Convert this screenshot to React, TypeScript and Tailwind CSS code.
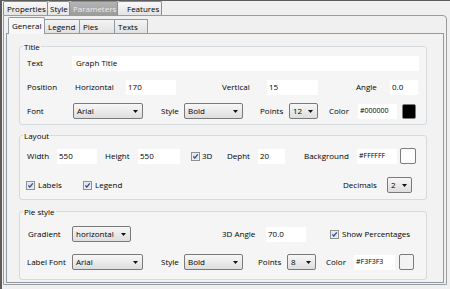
import { FC, ReactNode } from "react";

type BoxProps = {
  className?: string;
  children?: ReactNode;
};

const Lbl: FC<BoxProps> = ({ className = "", children }) => (
  <span className={`shrink-0 whitespace-nowrap ${className}`}>{children}</span>
);

const Field: FC<BoxProps> = ({ className = "", children }) => (
  <div className={`h-[15px] shrink-0 bg-white pl-[2px] leading-[13px] ${className}`}>
    {children}
  </div>
);

const Select: FC<BoxProps> = ({ className = "", children }) => (
  <div
    className={`flex h-[16px] shrink-0 items-center rounded-[2px] border border-[#7a7a7a] bg-gradient-to-b from-[#f7f7f7] to-[#dedede] pl-[3px] ${className}`}
  >
    <span className="leading-[14px]">{children}</span>
    <svg className="ml-auto mr-[4px]" width="5" height="3" viewBox="0 0 5 3">
      <path d="M0 0 L5 0 L2.5 3 Z" fill="#111" />
    </svg>
  </div>
);

const Check: FC<BoxProps> = ({ className = "" }) => (
  <svg className={`shrink-0 ${className}`} width="9" height="9" viewBox="0 0 9 9">
    <rect x="0.5" y="0.5" width="8" height="8" fill="#f4f4f4" stroke="#8e8f8f" />
    <rect x="1.5" y="1.5" width="6" height="6" fill="#dfe3ea" />
    <path d="M2.3 4.4 L3.8 6.1 L6.8 2.4" fill="none" stroke="#2d4a8c" strokeWidth="1.3" />
  </svg>
);

const Swatch: FC<BoxProps> = ({ className = "" }) => (
  <div className={`shrink-0 rounded-[2px] border border-[#7a7a7a] ${className}`} />
);

const Row: FC<BoxProps> = ({ className = "", children }) => (
  <div className={`flex h-[16px] items-center ${className}`}>{children}</div>
);

const Group: FC<BoxProps & { title: string }> = ({ title, className = "", children }) => (
  <fieldset
    className={`rounded-[3px] border border-[#d5dadf] bg-[#f5f5f5] ${className}`}
  >
    <legend className="ml-[3px] px-[1px] leading-[11px]">{title}</legend>
    {children}
  </fieldset>
);

const App: FC = () => {
  return (
    <div className="h-[289px] w-[450px] overflow-hidden border-l-2 border-t border-[#5c5c5c] bg-[#f0f0f0] font-['Open_Sans',sans-serif] text-[8px] text-black">
      {/* outer tabs */}
      <div className="ml-[1px] flex h-[14px]">
        <div className="w-[45px] rounded-t-[2px] border border-b-0 border-[#8d8d8d] bg-gradient-to-b from-[#f8f8f8] to-[#e4e4e4] pl-[3px] leading-[13px]">
          Properties
        </div>
        <div className="w-[22px] rounded-t-[2px] border border-b-0 border-l-0 border-[#8d8d8d] bg-gradient-to-b from-[#f8f8f8] to-[#e4e4e4] pl-[2px] leading-[13px]">
          Style
        </div>
        <div className="w-[48px] rounded-t-[2px] border border-b-0 border-l-0 border-[#8d8d8d] bg-gradient-to-b from-[#b4b4b4] to-[#9c9c9c] pl-[3px] leading-[13px] text-[#ececec]">
          Parameters
        </div>
        <div className="w-[44px] rounded-t-[2px] border border-b-0 border-l-0 border-[#8d8d8d] bg-gradient-to-b from-[#f8f8f8] to-[#e4e4e4] pl-[9px] leading-[13px]">
          Features
        </div>
      </div>

      {/* outer panel */}
      <div className="ml-[1px] h-[270px] w-[444px] rounded-tr-[4px] border border-[#9c9c9c] bg-[#f0f0f0] pt-[1px]">
        {/* inner tabs */}
        <div className="relative z-10 -mb-[1px] ml-[4px] flex h-[17px] items-end">
          <div className="h-[17px] w-[37px] rounded-t-[2px] border border-b-0 border-[#8e9aa6] bg-[#f7f7f7] pl-[3px] leading-[16px]">
            General
          </div>
          <div className="h-[15px] w-[35px] border border-l-0 border-[#8e9aa6] bg-gradient-to-b from-[#f4f4f4] to-[#e2e2e2] pl-[3px] leading-[13px]">
            Legend
          </div>
          <div className="h-[15px] w-[35px] border border-l-0 border-[#8e9aa6] bg-gradient-to-b from-[#f4f4f4] to-[#e2e2e2] pl-[3px] leading-[13px]">
            Pies
          </div>
          <div className="h-[15px] w-[33px] border border-l-0 border-[#8e9aa6] bg-gradient-to-b from-[#f4f4f4] to-[#e2e2e2] pl-[3px] leading-[13px]">
            Texts
          </div>
        </div>

        {/* inner panel */}
        <div className="ml-[2px] flex h-[250px] w-[438px] flex-col border border-[#8e9aa6] bg-[#f2f2f2] pl-[12px] pr-[16px]">
          <Group title="Title" className="mt-[7px] pb-[5px] pt-[3px]">
            <div className="flex flex-col gap-2">
              <Row>
                <Lbl className="ml-[7px] w-[45px]">Text</Lbl>
                <Field className="w-[347px] pl-[4px]">Graph Title</Field>
              </Row>
              <Row>
                <Lbl className="ml-[7px] w-[48px]">Position</Lbl>
                <Lbl className="w-[51px]">Horizontal</Lbl>
                <Field className="w-[50px]">170</Field>
                <Lbl className="ml-[46px] w-[45px]">Vertical</Lbl>
                <Field className="w-[51px]">15</Field>
                <Lbl className="ml-[38px] w-[34px]">Angle</Lbl>
                <Field className="w-[28px]">0.0</Field>
              </Row>
              <Row>
                <Lbl className="ml-[7px] w-[46px]">Font</Lbl>
                <Select className="w-[70px]">Arial</Select>
                <Lbl className="ml-[18px] w-[23px]">Style</Lbl>
                <Select className="w-[59px]">Bold</Select>
                <Lbl className="ml-[17px] w-[29px]">Points</Lbl>
                <Select className="w-[29px]">12</Select>
                <Lbl className="ml-[11px] w-[29px]">Color</Lbl>
                <Field className="w-[39px] text-[7px]">#000000</Field>
                <Swatch className="ml-[5px] h-[15px] w-[14px] bg-black" />
              </Row>
            </div>
          </Group>

          <Group title="Layout" className="mt-[5px] pb-[6px] pt-[7px]">
            <div className="flex flex-col gap-[13px]">
              <Row>
                <Lbl className="ml-[7px] w-[30px]">Width</Lbl>
                <Field className="w-[40px]">550</Field>
                <Lbl className="ml-[8px] w-[33px]">Height</Lbl>
                <Field className="w-[42px]">550</Field>
                <Check className="ml-[11px]" />
                <Lbl className="ml-[2px] w-[25px]">3D</Lbl>
                <Lbl className="w-[31px]">Depht</Lbl>
                <Field className="w-[27px]">20</Field>
                <Lbl className="ml-[19px] w-[53px]">Background</Lbl>
                <Field className="w-[40px] text-[7px]">#FFFFFF</Field>
                <Swatch className="ml-[3px] h-[16px] w-[16px] bg-white" />
              </Row>
              <Row>
                <Check className="ml-[6px]" />
                <Lbl className="ml-[3px] w-[45px]">Labels</Lbl>
                <Check />
                <Lbl className="ml-[3px] w-[248px]">Legend</Lbl>
                <Lbl className="w-[44px]">Decimals</Lbl>
                <Select className="w-[25px]">2</Select>
              </Row>
            </div>
          </Group>

          <Group title="Pie style" className="mt-[6px] pb-[9px] pt-[9px]">
            <div className="flex flex-col gap-[12px]">
              <Row>
                <Lbl className="ml-[8px] w-[44px]">Gradient</Lbl>
                <Select className="w-[59px]">horizontal</Select>
                <Lbl className="ml-[91px] w-[44px]">3D Angle</Lbl>
                <Field className="w-[40px]">70.0</Field>
                <Check className="ml-[24px]" />
                <Lbl className="ml-[3px]">Show Percentages</Lbl>
              </Row>
              <Row>
                <Lbl className="ml-[7px] w-[45px]">Label Font</Lbl>
                <Select className="w-[71px]">Arial</Select>
                <Lbl className="ml-[18px] w-[23px]">Style</Lbl>
                <Select className="w-[59px]">Bold</Select>
                <Lbl className="ml-[15px] w-[29px]">Points</Lbl>
                <Select className="w-[29px]">8</Select>
                <Lbl className="ml-[10px] w-[28px]">Color</Lbl>
                <Field className="w-[41px] text-[7px]">#F3F3F3</Field>
                <Swatch className="ml-[4px] h-[16px] w-[15px] bg-[#f3f3f3]" />
              </Row>
            </div>
          </Group>
        </div>
      </div>
    </div>
  );
};
export default App;
